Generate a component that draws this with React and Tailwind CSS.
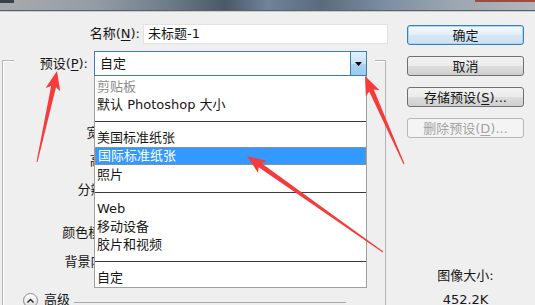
import React from 'react';

// 箭头：尾部细、头部粗的红色标注
function arrowPoints(tail, tip, headLen, headW, shaftTail, shaftHead) {
  const dx = tip[0] - tail[0];
  const dy = tip[1] - tail[1];
  const len = Math.hypot(dx, dy);
  const ux = dx / len;
  const uy = dy / len;
  const nx = -uy;
  const ny = ux;
  const bx = tip[0] - ux * headLen;
  const by = tip[1] - uy * headLen;
  const cx = bx - ux * 3;
  const cy = by - uy * 3;
  const p = (x, y) => `${x.toFixed(1)},${y.toFixed(1)}`;
  return [
    p(tail[0] + (nx * shaftTail) / 2, tail[1] + (ny * shaftTail) / 2),
    p(bx + (nx * shaftHead) / 2, by + (ny * shaftHead) / 2),
    p(cx + (nx * headW) / 2, cy + (ny * headW) / 2),
    p(tip[0], tip[1]),
    p(cx - (nx * headW) / 2, cy - (ny * headW) / 2),
    p(bx - (nx * shaftHead) / 2, by - (ny * shaftHead) / 2),
    p(tail[0] - (nx * shaftTail) / 2, tail[1] - (ny * shaftTail) / 2),
  ].join(' ');
}

const arrows = [
  { tail: [37, 162], tip: [57, 71] },
  { tail: [404, 164], tip: [365, 76] },
  { tail: [383, 252], tip: [247, 156] },
];

function Key({ children }) {
  return <span className="underline underline-offset-2">{children}</span>;
}

function WinButton({ children, primary, disabled }) {
  let cls =
    'h-[20px] w-full rounded-[3px] border flex items-center justify-center leading-none ';
  if (disabled) {
    cls += 'border-[#b5b8ba] bg-[#f4f4f4] text-[#a3a3a3]';
  } else if (primary) {
    cls +=
      'border-[#3c7fb1] bg-[linear-gradient(#f4f9fd,#e4eef7_50%,#d6e6f3_51%,#cfe2f1)] shadow-[inset_0_0_0_1px_#a8d8f6]';
  } else {
    cls += 'border-[#707070] bg-[linear-gradient(#f2f2f2,#ebebeb_50%,#dddddd_51%,#cfcfcf)]';
  }
  return <div className={cls}>{children}</div>;
}

function FormLabel({ children, mt }) {
  return (
    <div className={`h-[20px] flex items-center ${mt}`}>
      <div className="w-[137px] text-right whitespace-nowrap">{children}</div>
    </div>
  );
}

export default function App() {
  return (
    <div className="w-[535px] h-[305px] relative overflow-hidden bg-[#efefef] text-[13px] text-[#161616] font-['DejaVu_Sans','Noto_Sans_CJK_SC',sans-serif]">
      {/* 窗口标题栏（模糊） */}
      <div className="h-[10px] flex justify-between bg-[linear-gradient(90deg,#a7abaf_0%,#939ca5_18%,#6c7a88_32%,#4a5867_42%,#6f8399_50%,#5a6b7d_60%,#7c8ea2_72%,#9aa5b0_84%,#b3b7bb_100%)]">
        <div className="w-[14px] h-[3px] bg-[#3b4048]" />
        <div className="w-[60px] h-[2px] bg-[#9a4d40]" />
      </div>
      <div className="h-px bg-[#5b6068]" />
      <div className="h-px bg-[#c9cbcd]" />

      <div className="flex">
        {/* 左侧表单 */}
        <div className="w-[392px] flex flex-col">
          <div className="mt-[12px] h-[20px] flex items-center">
            <div className="w-[140px] text-right whitespace-nowrap">
              名称(<Key>N</Key>):
            </div>
            <div className="ml-[3px] w-[245px] h-[20px] bg-white border border-[#e2e2e2] flex items-center pl-[4px]">
              未标题-1
            </div>
          </div>

          <div className="ml-[2px] w-[384px] mt-[16px] h-[260px] border border-[#b4b4b4] shadow-[inset_1px_1px_0_#fff]">
            {/* 预设行压在分组框上边线 */}
            <div className="-mt-[10px] ml-[11px] w-[361px] h-[25px] bg-[#efefef] flex items-center">
              <div className="w-[74px] text-right whitespace-nowrap">
                预设(<Key>P</Key>):
              </div>
              <div className="ml-[6px] w-[273px] h-[25px] bg-white border border-[#3c7fb1] flex">
                <div className="flex-1 flex items-center pl-[5px]">自定</div>
                <div className="w-[16px] h-full border-l border-[#3c7fb1] bg-[linear-gradient(#e3f1fb,#c4e2f7_50%,#a9d3f1_51%,#9ccbee)] flex items-center justify-center">
                  <svg width="7" height="4" viewBox="0 0 7 4">
                    <path d="M0 0h7L3.5 4z" fill="#000" />
                  </svg>
                </div>
              </div>
            </div>

            <FormLabel mt="mt-[19px]">
              大小(<Key>I</Key>):
            </FormLabel>
            <FormLabel mt="mt-[8px]">
              宽度(<Key>W</Key>):
            </FormLabel>
            <FormLabel mt="mt-[8px]">
              高度(<Key>H</Key>):
            </FormLabel>
            <FormLabel mt="mt-[9px]">
              分辨率(<Key>R</Key>):
            </FormLabel>
            <FormLabel mt="mt-[23px]">
              颜色模式(<Key>M</Key>):
            </FormLabel>
            <FormLabel mt="mt-[9px]">
              背景内容(<Key>C</Key>):
            </FormLabel>

            <div className="mt-[18px] h-[20px] flex items-center">
              <div className="ml-[20px] w-[15px] h-[15px] rounded-full border border-[#8a8a8a] bg-[linear-gradient(#ffffff,#dcdcdc)] flex items-center justify-center">
                <svg width="7" height="5" viewBox="0 0 7 5">
                  <path d="M0.5 4.5L3.5 1.5L6.5 4.5" fill="none" stroke="#222" strokeWidth="1.4" />
                </svg>
              </div>
              <div className="ml-[6px]">高级</div>
              <div className="ml-[4px] mt-[5px] w-[272px] h-px bg-[#a9a9a9]" />
            </div>
          </div>
        </div>

        {/* 右侧按钮 */}
        <div className="ml-[15px] w-[117px] flex flex-col items-center">
          <div className="mt-[13px] w-full flex flex-col gap-[11px]">
            <WinButton primary>确定</WinButton>
            <WinButton>取消</WinButton>
            <WinButton>
              存储预设(<Key>S</Key>)...
            </WinButton>
            <WinButton disabled>
              删除预设(<Key>D</Key>)...
            </WinButton>
          </div>
          <div className="mt-[130px] leading-[16px]">图像大小:</div>
          <div className="mt-[8px] leading-[16px]">452.2K</div>
        </div>
      </div>

      {/* 展开的预设下拉列表 */}
      <div className="absolute left-[94px] top-[76px] w-[273px] h-[212px] bg-white border border-t-0 border-[#a0a0a0] flex flex-col">
        <div className="h-[2px]" />
        <div className="h-[18px] flex items-center pl-[2px] text-[#8c8c8c]">剪贴板</div>
        <div className="h-[18px] flex items-center pl-[2px]">默认 Photoshop 大小</div>
        <div className="h-[15px] flex items-center">
          <div className="w-full h-px bg-[#3a3a3a]" />
        </div>
        <div className="h-[18px] flex items-center pl-[2px]">美国标准纸张</div>
        <div className="h-[18px] flex items-center pl-[2px] bg-[#3399ff] text-white border border-dotted border-[#c88a4e]">
          国际标准纸张
        </div>
        <div className="h-[19px] flex items-center pl-[2px]">照片</div>
        <div className="h-[16px] flex items-center">
          <div className="w-full h-px bg-[#3a3a3a]" />
        </div>
        <div className="h-[18px] flex items-center pl-[2px]">Web</div>
        <div className="h-[18px] flex items-center pl-[2px]">移动设备</div>
        <div className="h-[18px] flex items-center pl-[2px]">胶片和视频</div>
        <div className="h-[15px] flex items-center">
          <div className="w-full h-px bg-[#3a3a3a]" />
        </div>
        <div className="h-[18px] flex items-center pl-[2px]">自定</div>
      </div>

      {/* 红色标注箭头 */}
      <svg className="absolute inset-0 pointer-events-none" width="535" height="305" viewBox="0 0 535 305">
        {arrows.map((a, i) => (
          <polygon key={i} points={arrowPoints(a.tail, a.tip, 16, 15, 1, 5)} fill="#f53b3b" />
        ))}
      </svg>
    </div>
  );
}
